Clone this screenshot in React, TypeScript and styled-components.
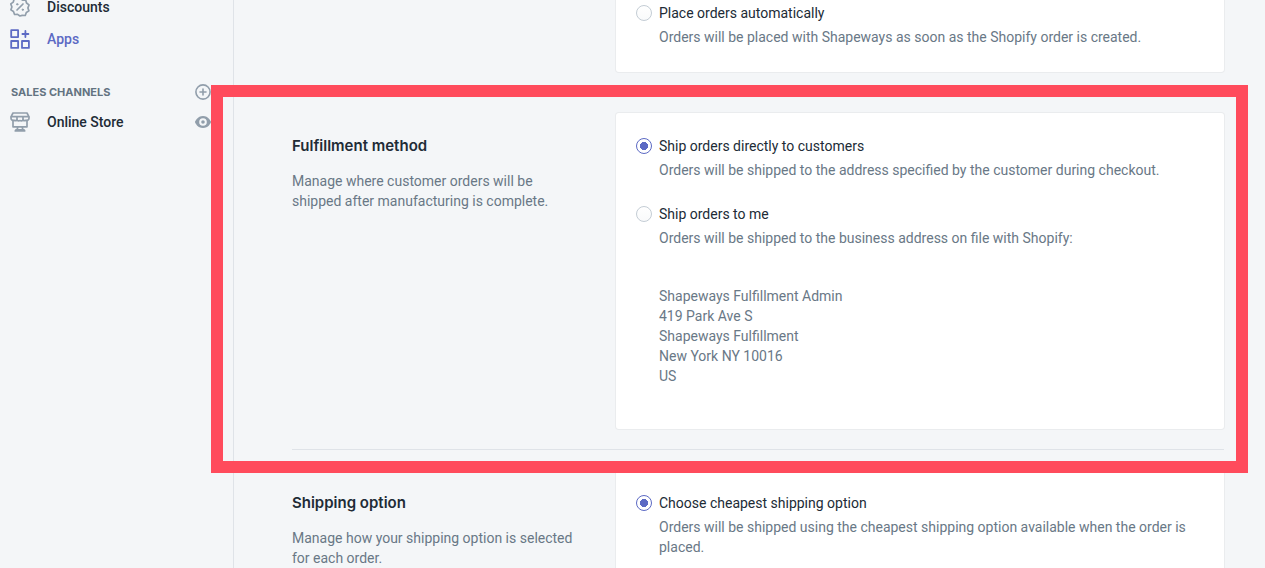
import React from "react";
import styled, { createGlobalStyle } from "styled-components";

const GlobalStyle = createGlobalStyle`
  *, *::before, *::after { box-sizing: border-box; }
  body {
    margin: 0;
    background: #f4f6f8;
    color: #212b36;
    font-family: Roboto, "Liberation Sans", sans-serif;
    font-size: 14px;
    line-height: 20px;
  }
  h2, p { margin: 0; }
`;

const Page = styled.div`
  display: flex;
  height: 100vh;
  overflow: hidden;
`;

const Sidebar = styled.nav`
  flex: 0 0 234px;
  border-right: 1px solid #dfe3e8;
  padding-right: 22px;
  margin-top: -9px;
`;

const NavRow = styled.div`
  display: flex;
  align-items: center;
  justify-content: space-between;
  height: 32px;
  padding-left: 10px;
`;

const NavLink = styled.a<{ $active?: boolean }>`
  display: flex;
  align-items: center;
  gap: 17px;
  color: ${(p) => (p.$active ? "#5c6ac4" : "#212b36")};
  font-weight: 500;
  text-decoration: none;

  svg { color: ${(p) => (p.$active ? "#5c6ac4" : "#919eab")}; }
`;

const NavHeading = styled.div`
  display: flex;
  align-items: center;
  justify-content: space-between;
  margin: 27px 0 4px;
  padding-left: 11px;
`;

const NavTitle = styled.h2`
  color: #637381;
  font-family: Inter, "Liberation Sans", sans-serif;
  font-size: 11px;
  font-weight: 700;
  line-height: 20px;
  text-transform: uppercase;
`;

const IconButton = styled.button`
  display: flex;
  padding: 0;
  border: 0;
  background: none;
  color: #919eab;
  cursor: pointer;
`;

const Main = styled.main`
  flex: 1;
  min-width: 0;
  padding: 0 41px 0 58px;
`;

const Section = styled.section<{ $first?: boolean }>`
  position: relative;
  display: grid;
  grid-template-columns: minmax(0, 1fr) minmax(0, 2fr);
  gap: 20px;
  padding: ${(p) => (p.$first ? "0 0 20px" : "20px 0")};
  border-top: ${(p) => (p.$first ? "0" : "1px solid #dfe3e8")};
`;

const Annotation = styled.div`
  padding: 23px 20px 0 0;
`;

const SectionTitle = styled.h2`
  font-family: Inter, "Liberation Sans", sans-serif;
  font-size: 15px;
  font-weight: 600;
  line-height: 20px;
  margin-bottom: 15px;
`;

const Muted = styled.p`
  color: #697886;
`;

const Card = styled.div<{ $first?: boolean }>`
  display: flex;
  flex-direction: column;
  gap: 24px;
  padding: ${(p) => (p.$first ? "3px" : "23px")} 20px 25px;
  border-radius: ${(p) => (p.$first ? "0 0 3px 3px" : "3px")};
  background: #fff;
  box-shadow: 0 0 0 1px rgba(63, 63, 68, 0.05);
`;

const OptionLabel = styled.label`
  display: flex;
  align-items: center;
  gap: 7px;
  margin-bottom: 4px;
  cursor: pointer;
`;

const Radio = styled.input`
  appearance: none;
  flex: none;
  width: 16px;
  height: 16px;
  margin: 0;
  border: 1px solid #c4cdd5;
  border-radius: 50%;
  background: linear-gradient(#fff, #f9fafb);

  &:checked {
    border-color: #5c6ac4;
    background: radial-gradient(circle, #5c6ac4 4px, #fff 4px);
  }
`;

const OptionHelp = styled.div`
  padding-left: 23px;
`;

const Address = styled.address`
  margin: 38px 0 18px;
  color: #697886;
  font-style: normal;
`;

const Highlight = styled.div`
  position: absolute;
  z-index: 1;
  inset: -8px -24px -24px -81px;
  border: 12px solid #ff4b5c;
  pointer-events: none;
`;

const DiscountIcon = () => (
  <svg width="20" height="20" viewBox="0 0 20 20" fill="none" stroke="currentColor" strokeWidth="1.7" strokeLinejoin="round" strokeLinecap="round" aria-hidden="true">
    <path d="M10 1l2.600 1.900 3.200-.1.900 3.100 2.500 1.900-1.100 3 1 3-2.600 1.700-1.100 3-3.100-.1L10 19l-2.300-1.600-3.100.1-1.100-3L.9 12.800l1-3-1.100-3 2.500-1.900.9-3.100 3.200.1z" transform="translate(0 .2) scale(.99)" />
    <path d="M7 13l6-6" />
    <circle cx="7.200" cy="7.300" r=".7" fill="currentColor" strokeWidth="1" />
    <circle cx="12.800" cy="12.700" r=".7" fill="currentColor" strokeWidth="1" />
  </svg>
);

const AppsIcon = () => (
  <svg width="20" height="20" viewBox="0 0 20 20" fill="none" stroke="currentColor" strokeWidth="1.8" strokeLinejoin="round" strokeLinecap="round" aria-hidden="true">
    <path d="M1.200 1.200h6.900v6.900H1.200zM1.200 12h6.900v6.900H1.200zM12 12h6.900v6.900H12zM15.400 2v6M12.400 5h6" />
  </svg>
);

const StoreIcon = () => (
  <svg width="20" height="20" viewBox="0 0 20 20" fill="none" stroke="currentColor" strokeWidth="1.7" strokeLinejoin="round" strokeLinecap="round" aria-hidden="true">
    <path d="M3 1h14l2 3.800v1.400a2.200 2.200 0 0 1-3 2 2.600 2.600 0 0 1-3-.2 2.400 2.400 0 0 1-3 .6A2.400 2.400 0 0 1 7 8a2.600 2.600 0 0 1-3 .2 2.200 2.200 0 0 1-3-2V4.800z" />
    <path d="M1.500 4.600h17M7 5v2.500M13 5v2.500M3 8.500v6.300h14V8.500M7.800 15l-.6 2.500M12.200 15l.6 2.500M5.300 19l.6-1.200h8.200l.6 1.200z" />
  </svg>
);

const PlusIcon = () => (
  <svg width="16" height="16" viewBox="0 0 16 16" fill="none" stroke="currentColor" strokeWidth="1.600" strokeLinecap="round" aria-hidden="true">
    <circle cx="8" cy="8" r="7.100" />
    <path d="M8 5v6M5 8h6" />
  </svg>
);

const EyeIcon = () => (
  <svg width="16" height="16" viewBox="0 0 16 16" fill="currentColor" fillRule="evenodd" aria-hidden="true">
    <path d="M8 2C2.500 2 .2 7.400.1 7.600a1 1 0 0 0 0 .8C.2 8.600 2.500 14 8 14s7.800-5.400 7.900-5.600a1 1 0 0 0 0-.8C15.800 7.400 13.500 2 8 2zm0 2.200a3.800 3.800 0 1 1 0 7.600 3.800 3.800 0 0 1 0-7.600zM8 6.200a1.800 1.800 0 1 0 0 3.600 1.800 1.800 0 0 0 0-3.600z" />
  </svg>
);

type OptionProps = {
  id: string;
  group: string;
  label: string;
  checked?: boolean;
  children: React.ReactNode;
};

const Option = ({ id, group, label, checked, children }: OptionProps) => (
  <div>
    <OptionLabel htmlFor={id}>
      <Radio type="radio" id={id} name={group} defaultChecked={checked} />
      {label}
    </OptionLabel>
    <OptionHelp>{children}</OptionHelp>
  </div>
);

export default function App() {
  return (
    <>
      <GlobalStyle />
      <Page>
        <Sidebar>
          <NavRow>
            <NavLink href="#discounts"><DiscountIcon />Discounts</NavLink>
          </NavRow>
          <NavRow>
            <NavLink href="#apps" $active><AppsIcon />Apps</NavLink>
          </NavRow>
          <NavHeading>
            <NavTitle>Sales channels</NavTitle>
            <IconButton type="button" aria-label="Add sales channel"><PlusIcon /></IconButton>
          </NavHeading>
          <NavRow>
            <NavLink href="#store"><StoreIcon />Online Store</NavLink>
            <IconButton type="button" aria-label="View online store"><EyeIcon /></IconButton>
          </NavRow>
        </Sidebar>

        <Main>
          <Section $first>
            <Annotation />
            <Card $first>
              <Option id="place-auto" group="placement" label="Place orders automatically">
                <Muted>Orders will be placed with Shapeways as soon as the Shopify order is created.</Muted>
              </Option>
            </Card>
          </Section>

          <Section>
            <Annotation>
              <SectionTitle>Fulfillment method</SectionTitle>
              <Muted>Manage where customer orders will be shipped after manufacturing is complete.</Muted>
            </Annotation>
            <Card>
              <Option id="ship-customer" group="fulfillment" label="Ship orders directly to customers" checked>
                <Muted>Orders will be shipped to the address specified by the customer during checkout.</Muted>
              </Option>
              <Option id="ship-me" group="fulfillment" label="Ship orders to me">
                <Muted>Orders will be shipped to the business address on file with Shopify:</Muted>
                <Address>
                  Shapeways Fulfillment Admin<br />
                  419 Park Ave S<br />
                  Shapeways Fulfillment<br />
                  New York NY 10016<br />
                  US
                </Address>
              </Option>
            </Card>
            <Highlight />
          </Section>

          <Section>
            <Annotation>
              <SectionTitle>Shipping option</SectionTitle>
              <Muted>Manage how your shipping option is selected for each order.</Muted>
            </Annotation>
            <Card>
              <Option id="ship-cheapest" group="shipping" label="Choose cheapest shipping option" checked>
                <Muted>Orders will be shipped using the cheapest shipping option available when the order is placed.</Muted>
              </Option>
            </Card>
          </Section>
        </Main>
      </Page>
    </>
  );
}
